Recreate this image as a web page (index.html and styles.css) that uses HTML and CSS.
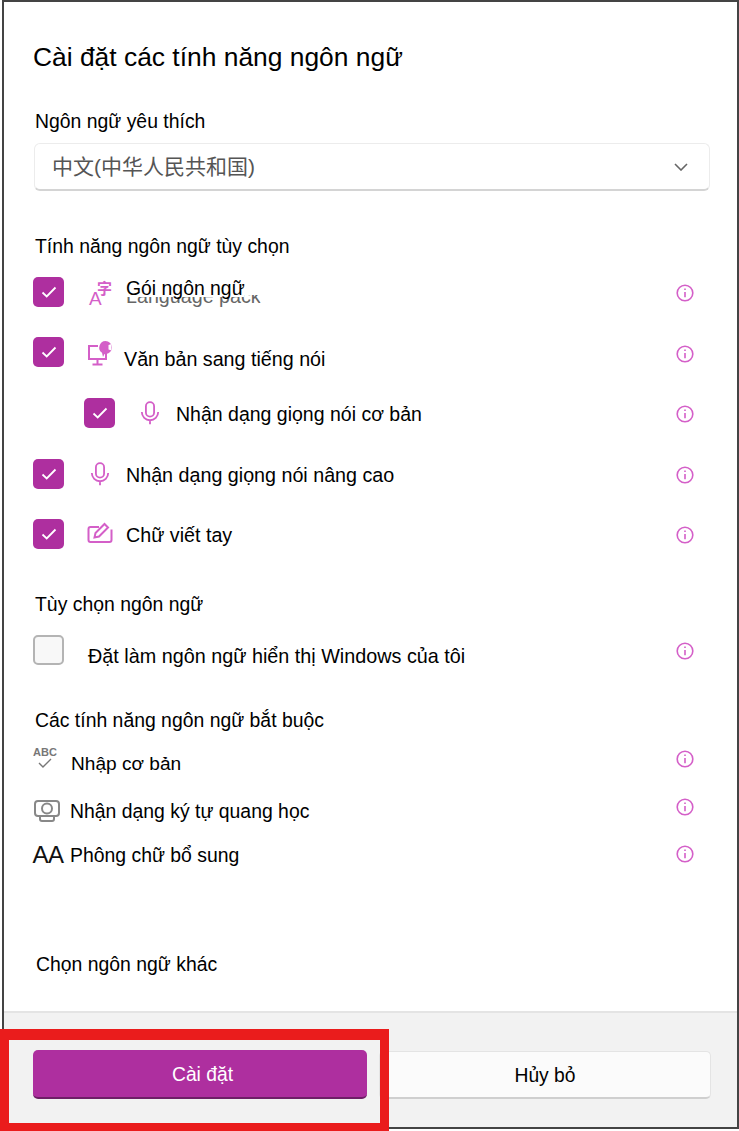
FILE: index.html
```html
<!DOCTYPE html>
<html lang="vi">
<head>
<meta charset="utf-8">
<title>Cài đặt các tính năng ngôn ngữ</title>
<link rel="stylesheet" href="styles.css">
</head>
<body>
<div class="dialog">
  <main class="content">
    <h1 class="title">Cài đặt các tính năng ngôn ngữ</h1>
    <div class="label pref-label">Ngôn ngữ yêu thích</div>
    <div class="select">
      <span class="select-value">中文(中华人民共和国)</span>
      <svg class="chevron" viewBox="0 0 14 8"><path d="M1 1l6 6 6-6"/></svg>
    </div>

    <div class="label optional-label">Tính năng ngôn ngữ tùy chọn</div>

    <div class="row row-1">
      <span class="check on"><svg viewBox="0 0 16 12"><path d="M1.5 6.5l4.2 4L14.5 1.5"/></svg></span>
      <svg class="icon icon-pack" viewBox="0 0 24 24">
        <text x="0" y="23" class="glyph-a">A</text>
        <text x="8" y="12" class="glyph-zi">字</text>
      </svg>
      <span class="text text-pack"><span class="ghost">Language pack</span><span class="cover">Gói ngôn ngữ</span></span>
      <svg class="info info-1" viewBox="0 0 18 18"><circle cx="9" cy="9" r="7.8"/><path d="M9 8v5.2M9 4.6v1.4"/></svg>
    </div>

    <div class="row row-2">
      <span class="check on"><svg viewBox="0 0 16 12"><path d="M1.5 6.5l4.2 4L14.5 1.5"/></svg></span>
      <svg class="icon icon-tts" viewBox="0 0 26 26">
        <path d="M11 6H2v13h17v-6M10.500 19v5M5.500 24.500h10"/>
        <path class="filled" d="M18.500 1a6.500 6.500 0 0 1 0 13h-1l-1.500 3-1-4.200a6.500 6.500 0 0 1 3.500-11.800z"/>
        <path class="knock" d="M21.500 5l3-1v6.500l-3-1z"/>
      </svg>
      <span class="text text-tts">Văn bản sang tiếng nói</span>
      <svg class="info info-2" viewBox="0 0 18 18"><circle cx="9" cy="9" r="7.8"/><path d="M9 8v5.2M9 4.6v1.4"/></svg>
    </div>

    <div class="row row-3">
      <span class="check on"><svg viewBox="0 0 16 12"><path d="M1.5 6.5l4.2 4L14.5 1.5"/></svg></span>
      <svg class="icon icon-mic" viewBox="0 0 22 26">
        <rect x="6.500" y="1" width="9" height="16" rx="4.500"/>
        <path d="M2 12a9 9 0 0 0 18 0M11 21v4.500"/>
      </svg>
      <span class="text text-basic">Nhận dạng giọng nói cơ bản</span>
      <svg class="info info-3" viewBox="0 0 18 18"><circle cx="9" cy="9" r="7.8"/><path d="M9 8v5.2M9 4.6v1.4"/></svg>
    </div>

    <div class="row row-4">
      <span class="check on"><svg viewBox="0 0 16 12"><path d="M1.5 6.5l4.2 4L14.5 1.5"/></svg></span>
      <svg class="icon icon-mic mic-adv" viewBox="0 0 22 26">
        <rect x="6.500" y="1" width="9" height="16" rx="4.500"/>
        <path d="M2 12a9 9 0 0 0 18 0M11 21v4.500"/>
      </svg>
      <span class="text text-adv">Nhận dạng giọng nói nâng cao</span>
      <svg class="info info-3" viewBox="0 0 18 18"><circle cx="9" cy="9" r="7.8"/><path d="M9 8v5.2M9 4.6v1.4"/></svg>
    </div>

    <div class="row row-5">
      <span class="check on"><svg viewBox="0 0 16 12"><path d="M1.5 6.5l4.2 4L14.5 1.5"/></svg></span>
      <svg class="icon icon-pen" viewBox="0 0 26 22">
        <path d="M12 5H3.500a2 2 0 0 0-2 2v11a2 2 0 0 0 2 2h19a2 2 0 0 0 2-2V7.500"/>
        <path d="M7.500 15.500l1-4.500 9-9 3.500 3.500-9 9z"/>
      </svg>
      <span class="text text-hand">Chữ viết tay</span>
      <svg class="info info-3" viewBox="0 0 18 18"><circle cx="9" cy="9" r="7.8"/><path d="M9 8v5.2M9 4.6v1.4"/></svg>
    </div>

    <div class="label choice-label">Tùy chọn ngôn ngữ</div>

    <div class="row row-6">
      <span class="check off"></span>
      <span class="text text-display">Đặt làm ngôn ngữ hiển thị Windows của tôi</span>
      <svg class="info info-6" viewBox="0 0 18 18"><circle cx="9" cy="9" r="7.8"/><path d="M9 8v5.2M9 4.6v1.4"/></svg>
    </div>

    <div class="label required-label">Các tính năng ngôn ngữ bắt buộc</div>

    <div class="req req-1">
      <span class="req-icon abc"><span class="abc-text">ABC</span>
        <svg class="abc-check" viewBox="0 0 16 10"><path d="M2 5l4 4 8-8"/></svg>
      </span>
      <span class="text req-text-1">Nhập cơ bản</span>
      <svg class="info info-req-1" viewBox="0 0 18 18"><circle cx="9" cy="9" r="7.8"/><path d="M9 8v5.2M9 4.6v1.4"/></svg>
    </div>
    <div class="req req-2">
      <span class="req-icon">
        <svg class="ocr" viewBox="0 0 26 22">
          <rect x="1" y="1" width="24" height="15" rx="3"/>
          <circle cx="13" cy="8.500" r="5"/>
          <path d="M6 16v3a2 2 0 0 0 2 2h10a2 2 0 0 0 2-2v-3"/>
        </svg>
      </span>
      <span class="text req-text-2">Nhận dạng ký tự quang học</span>
      <svg class="info info-req-2" viewBox="0 0 18 18"><circle cx="9" cy="9" r="7.8"/><path d="M9 8v5.2M9 4.6v1.4"/></svg>
    </div>
    <div class="req req-3">
      <span class="req-icon aa">AA</span>
      <span class="text req-text-2">Phông chữ bổ sung</span>
      <svg class="info info-req-3" viewBox="0 0 18 18"><circle cx="9" cy="9" r="7.8"/><path d="M9 8v5.2M9 4.6v1.4"/></svg>
    </div>

    <div class="label other-label">Chọn ngôn ngữ khác</div>
  </main>
  <footer class="footer">
    <button class="btn primary">Cài đặt</button>
    <button class="btn secondary">Hủy bỏ</button>
  </footer>
</div>
<div class="highlight"></div>
</body>
</html>
```
FILE: styles.css
```css
* { box-sizing: border-box; }
html, body { margin: 0; padding: 0; height: 1131px; overflow: hidden; background: #fff; }
body { position: relative; font-family: "Liberation Sans", "Noto Sans CJK SC", sans-serif; color: #000; }

.dialog {
  width: 737px; height: 1129px; margin: 0 0 0 2px;
  border: 2px solid #444;
  display: flex; flex-direction: column;
  background: #fff;
}
.content { flex: 1; padding: 0 26px 0 29px; display: flex; flex-direction: column; min-height: 0; }
.footer {
  height: 116px; flex: none; background: #f2f2f2; border-top: 2px solid #e4e4e4;
  padding: 37px 25px 0 29px; display: flex;
}

.title { margin: 39px 0 0 0; font-size: 26.4px; line-height: 32px; font-weight: 400; }
.label { font-size: 19.4px; line-height: 24px; margin-left: 2px; }
.pref-label { margin-top: 36px; }
.select {
  margin-top: 10px; margin-left: 1px; height: 48px; width: 676px;
  border: 1px solid #ececec; border-bottom: 2px solid #d4d4d4; border-radius: 6px;
  display: flex; align-items: center; justify-content: space-between;
  padding: 0 21px 0 17px; background: #fff;
}
.select-value { font-size: 21px; color: #555; margin-top: -4px; }
.chevron { width: 14px; height: 8px; fill: none; stroke: #666; stroke-width: 1.6; }
.optional-label { margin-top: 43px; }
.choice-label { margin-top: 43px; }
.required-label { margin-top: 43px; }
.other-label { margin-top: 82px; margin-left: 3px; }

.row { display: flex; align-items: center; height: 30px; position: relative; }
.row-1 { margin-top: 19px; }
.row-2 { margin-top: 30px; }
.row-3 { margin-top: 31px; padding-left: 51px; }
.row-4 { margin-top: 31px; }
.row-5 { margin-top: 30px; }
.row-6 { margin-top: 19px; }

.check {
  width: 31px; height: 30px; border-radius: 5px; flex: none;
  display: flex; align-items: center; justify-content: center;
}
.check.on { background: #ae2f9f; }
.check.on svg { width: 16px; height: 12px; fill: none; stroke: #fff; stroke-width: 1.8; }
.check.off { background: #f8f8f8; border: 2px solid #b4b4b4; }

.icon { flex: none; fill: none; stroke: #d45fc8; stroke-width: 2; overflow: visible; }
.icon-pack { width: 24px; height: 24px; margin-left: 25px; margin-top: 4px; }
.glyph-a { font-size: 19px; fill: #d45fc8; stroke: none; font-family: "Liberation Sans", sans-serif; }
.glyph-zi { font-size: 15px; fill: #d45fc8; stroke: none; font-family: "Noto Sans CJK SC", sans-serif; font-weight: 700; }
.icon-tts { width: 26px; height: 26px; margin-left: 23px; margin-top: 1px; }
.icon-tts .filled { fill: #d45fc8; stroke: none; }
.icon-tts .knock { fill: #fff; stroke: none; }
.icon-mic { width: 20px; height: 24px; margin-left: 25px; }
.mic-adv { margin-left: 26px; }
.icon-pen { width: 26px; height: 22px; margin-left: 23px; margin-top: -3px; }

.text { font-size: 19.7px; line-height: 24px; white-space: nowrap; }
.text-pack { margin-left: 13px; margin-top: -7px; position: relative; display: block; width: 140px; }
.cover { position: relative; display: block; background: #fff; font-size: 19.4px; line-height: 17px; height: 17px; width: 118px; }
.ghost { position: absolute; left: 0; top: 4px; color: #666; font-size: 19.7px; clip-path: inset(11px 0 0 0); }
.text-tts { margin-left: 11px; margin-top: 13px; }
.text-basic { margin-left: 16px; margin-top: 2px; font-size: 19.5px; }
.text-adv { margin-left: 16px; margin-top: 2px; }
.text-hand { margin-left: 13px; margin-top: 2px; }
.text-display { margin-left: 24px; margin-top: 12px; font-size: 19.8px; }

.info { width: 18px; height: 18px; flex: none; margin-left: auto; margin-right: 17px; fill: none; stroke: #d45fc8; stroke-width: 1.6; }
.info-1 { margin-top: 2px; }
.info-2 { margin-top: 4px; }
.info-3 { margin-top: 2px; }
.info-6 { margin-top: 2px; }

.req { display: flex; align-items: center; height: 30px; }
.req-1 { margin-top: 15px; }
.req-2 { margin-top: 19px; }
.req-3 { margin-top: 14px; }
.req-icon { width: 30px; flex: none; display: flex; align-items: center; justify-content: center; color: #666; }
.abc { flex-direction: column; margin-top: -9px; margin-left: -3px; margin-right: 3px; }
.abc-text { font-size: 11px; font-weight: 700; line-height: 11px; color: #777; }
.abc-check { width: 16px; height: 10px; fill: none; stroke: #777; stroke-width: 1.4; }
.ocr { width: 26px; height: 22px; fill: none; stroke: #888; stroke-width: 2; margin-left: -3px; }
.aa { font-size: 24px; color: #111; width: 30px; letter-spacing: -.5px; }
.req .text { font-size: 19.4px; }
.req .req-text-1 { margin-left: 8px; margin-top: 3px; font-size: 19.1px; }
.req-text-2 { margin-left: 7px; }
.info-req-1 { margin-top: -7px; }
.info-req-2 { margin-top: -8px; }
.info-req-3 { margin-top: -2px; }

.btn {
  font-family: inherit; font-size: 19.3px; height: 49px; border-radius: 5px; cursor: pointer; padding-top: 3px;
}
.primary {
  width: 334px; background: #ae2f9f; color: #fff; border: 0; border-bottom: 2px solid #6e1f66; flex: none; padding-left: 11px;
}
.secondary {
  margin-left: 12px; width: 332px; background: #fbfbfb; color: #000;
  border: 1px solid #e4e4e4; border-bottom: 2px solid #cfcfcf; height: 48px; margin-top: 1px;
}

.highlight {
  position: absolute; left: 0; top: 1029px; width: 389px; height: 102px;
  border: solid #ea1c1c; border-width: 11px 9px 8px 9px; pointer-events: none;
}
```
